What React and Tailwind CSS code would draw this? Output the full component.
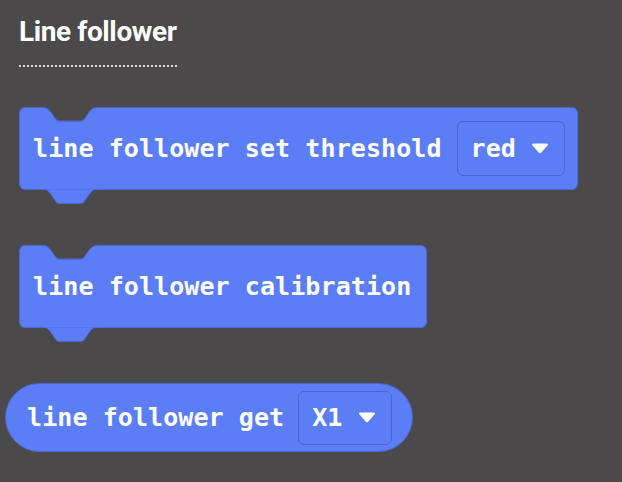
import React from 'react'

const mono = { fontFamily: '"DejaVu Sans Mono", "Liberation Mono", monospace' }

function Notch() {
  return (
    <svg className="absolute top-[-1px] left-[22px]" width="58" height="16" viewBox="0 0 58 16">
      <path d="M0 0 C4 0 6 1.5 9 5 L13 11 C14.5 13.2 15.5 13.8 18 13.8 L38 13.8 C40.5 13.8 41.5 13.2 43 11 L47 5 C50 1.5 52 0 56 0 Z" fill="#4b494a" />
      <path d="M0 0.5 C4 0.5 6 2 9 5.5 L13 11.5 C14.5 13.7 15.5 14.3 18 14.3 L38 14.3 C40.5 14.3 41.5 13.7 43 11.5 L47 5.5 C50 2 52 0.5 56 0.5" fill="none" stroke="#4a67d6" strokeWidth="1" />
    </svg>
  )
}

function Tab() {
  return (
    <svg className="absolute top-full left-[22px]" width="58" height="17" viewBox="0 0 58 17">
      <path d="M0 0 C4 0 6 1.5 9 5.5 L13 11.5 C14.5 13.8 15.5 14.5 18 14.5 L38 14.5 C40.5 14.5 41.5 13.8 43 11.5 L47 5.5 C50 1.5 52 0 56 0 Z" fill="#5b7ef7" stroke="#4a67d6" strokeWidth="1" />
      <rect x="0" y="-1" width="57" height="1.2" fill="#5b7ef7" />
    </svg>
  )
}

function Caret() {
  return (
    <svg width="18" height="12" viewBox="0 0 18 12" className="ml-[15px]">
      <path d="M2.5 0.5 H15.5 Q18 0.5 16.5 2.5 L10.4 9.6 Q9 11.2 7.6 9.6 L1.5 2.5 Q0 0.5 2.5 0.5 Z" fill="#ffffff" />
    </svg>
  )
}

function Dropdown({ label, h }) {
  return (
    <div className={`flex items-center ${h} rounded-[6px] border border-[#4864cc] pl-[13px] pr-[15px]`}>
      <span>{label}</span>
      <Caret />
    </div>
  )
}

function StackBlock({ children }) {
  return (
    <div className="relative self-start flex items-center h-[83px] ml-[19px] rounded-[6px] border border-[#4a67d6] bg-[#5b7ef7] pl-[13px] pr-[12px] text-white font-bold text-[25px] tracking-[0.08px]" style={mono}>
      <Notch />
      {children}
      <Tab />
    </div>
  )
}

export default function App() {
  return (
    <div className="w-[622px] h-[482px] overflow-hidden bg-[#4b494a] flex flex-col">
      {/* Category heading */}
      <div className="pt-[15px] pl-[19px]">
        <div className="text-[28px] leading-[34px] font-bold text-white tracking-[-0.4px]" style={{ fontFamily: 'Roboto, sans-serif' }}>
          Line follower
        </div>
        <div className="mt-[16px] w-[158px] border-b-2 border-dotted border-[#dcdcdc]" />
      </div>

      <div className="mt-[40px] flex flex-col">
        <StackBlock>
          <span>line follower set threshold</span>
          <div className="ml-[15px]">
            <Dropdown label="red" h="h-[55px]" />
          </div>
        </StackBlock>

        <div className="mt-[55px] flex">
          <StackBlock>
            <span className="pr-[3px]">line follower calibration</span>
          </StackBlock>
        </div>

        <div className="mt-[55px] flex">
          <div className="flex items-center h-[69px] ml-[5px] rounded-full border border-[#4a67d6] bg-[#5b7ef7] pl-[21px] pr-[20px] text-white font-bold text-[25px] tracking-[0.08px]" style={mono}>
            <span>line follower get</span>
            <div className="ml-[14px]">
              <Dropdown label="X1" h="h-[54px]" />
            </div>
          </div>
        </div>
      </div>
    </div>
  )
}
